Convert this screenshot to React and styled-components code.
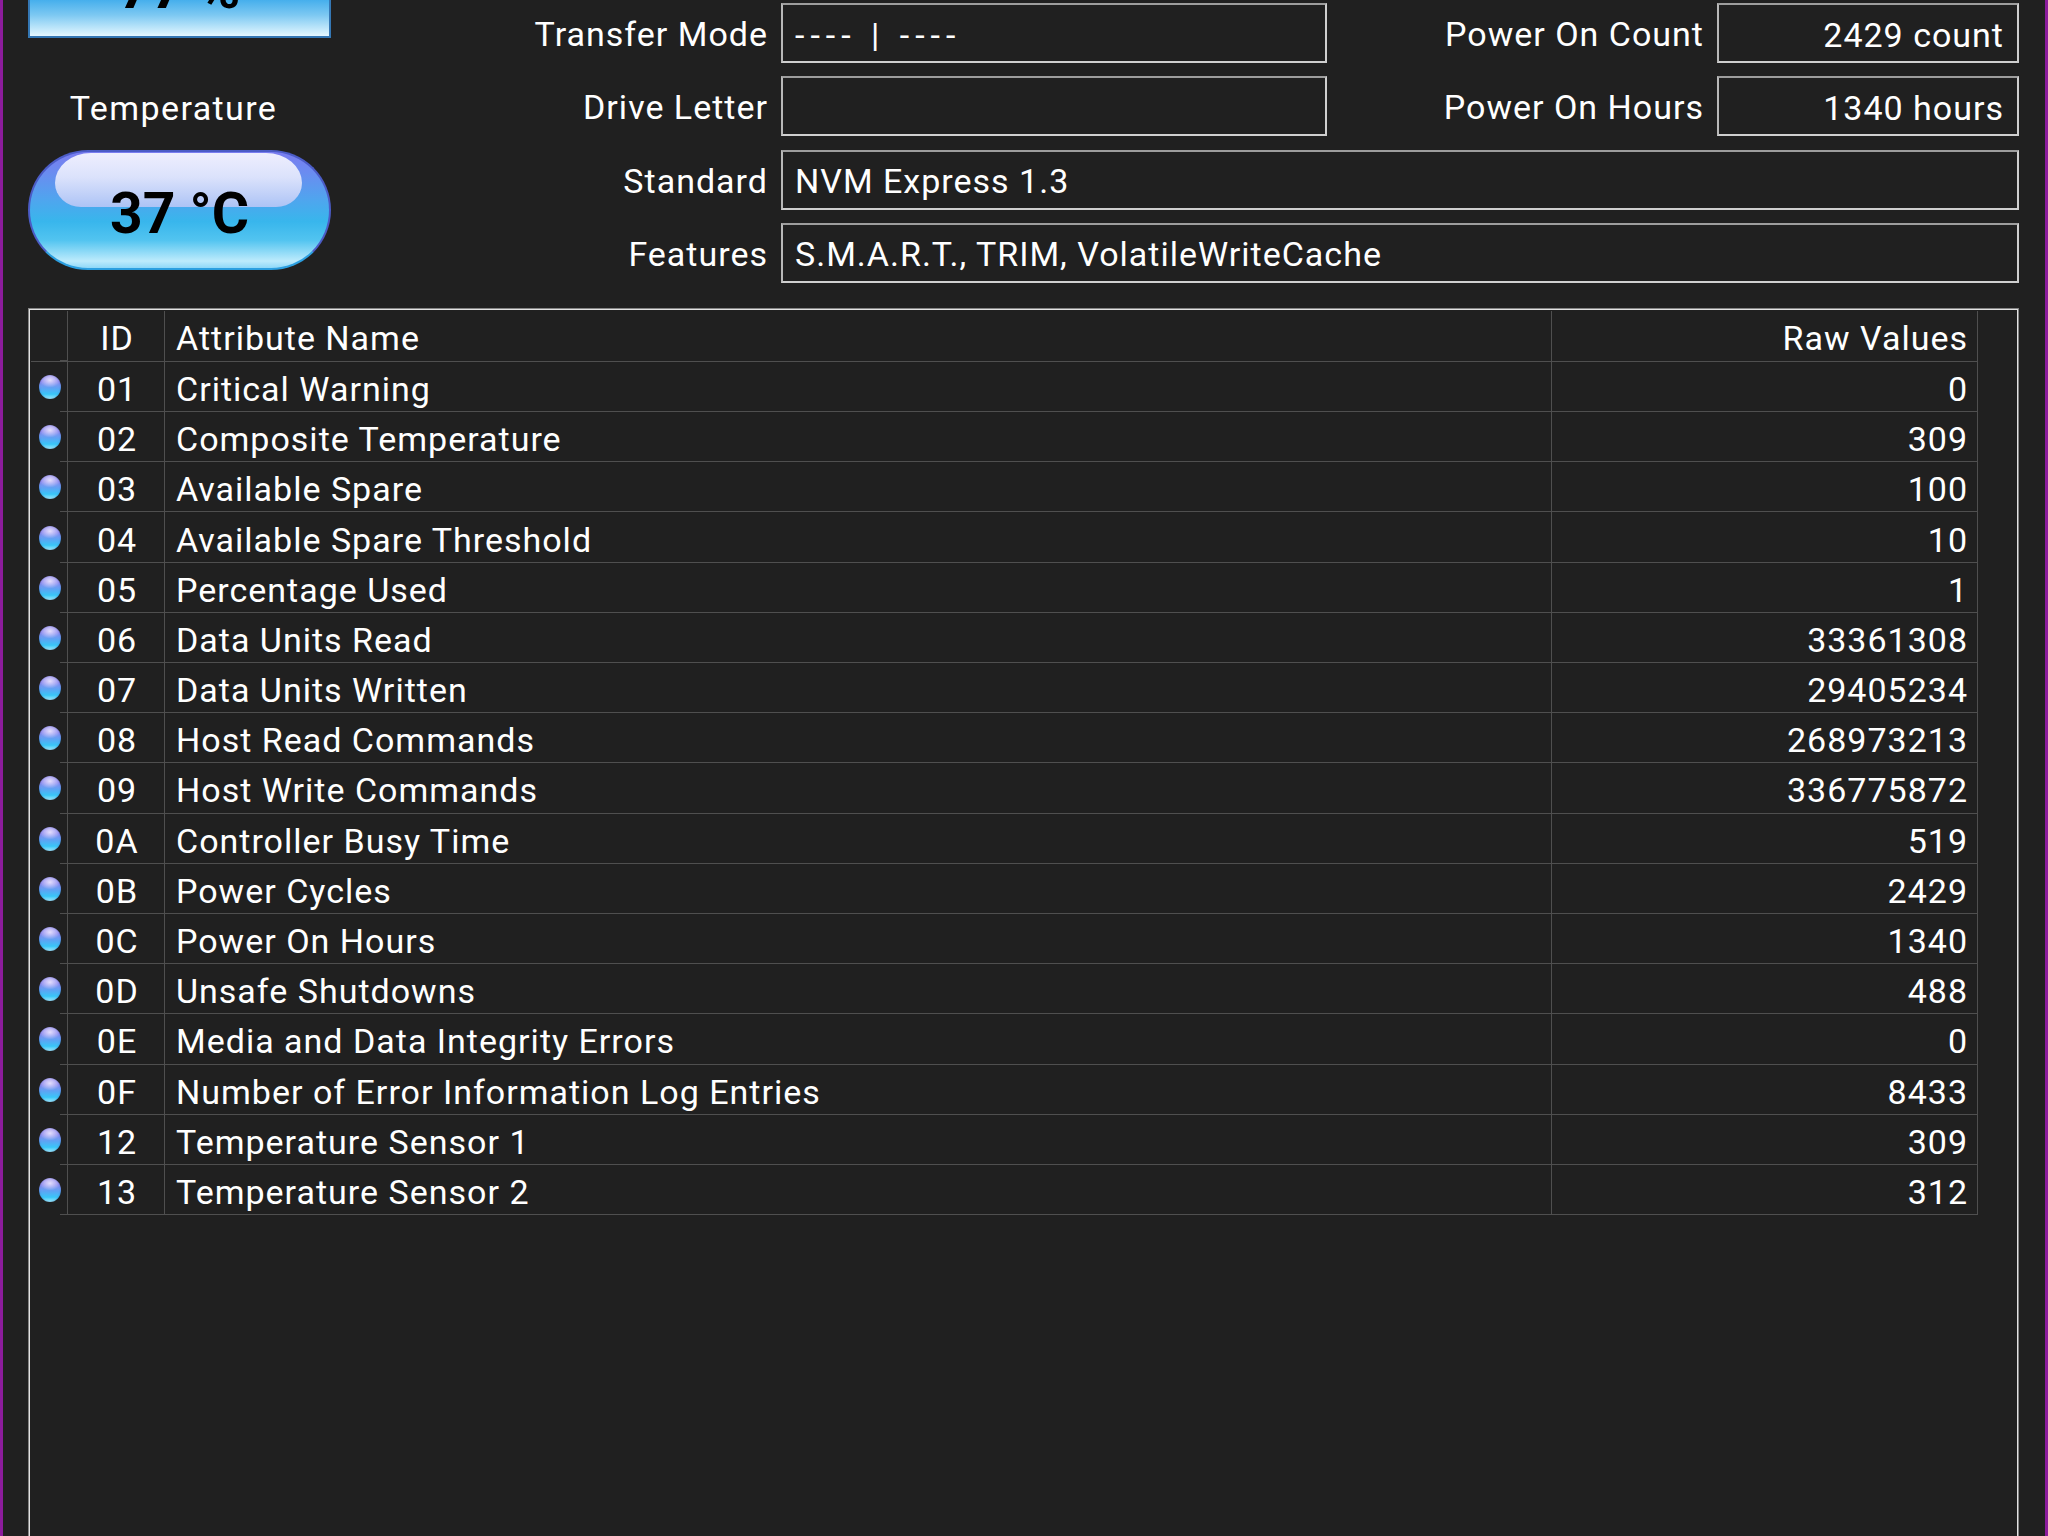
import React from 'react';
import styled, { createGlobalStyle } from 'styled-components';

const GlobalStyle = createGlobalStyle`
  html, body {
    margin: 0;
    padding: 0;
    background: #202020;
    overflow: hidden;
  }
  body {
    font-family: Roboto, "Liberation Sans", sans-serif;
  }
`;

const Window = styled.div`
  box-sizing: border-box;
  height: 1536px;
  border-left: 3px solid #8c1c9c;
  border-right: 3px solid #8c1c9c;
  padding: 3px 26px 0 25px;
  background: #202020;
  color: #fff;
  font-size: 34px;
  letter-spacing: 1px;
  display: flex;
  flex-direction: column;
  overflow: hidden;
`;

const TopSection = styled.div`
  display: flex;
  align-items: flex-start;
`;

const StatusColumn = styled.div`
  width: 303px;
  flex: none;
  display: flex;
  flex-direction: column;
  align-items: stretch;
`;

const HealthBox = styled.div`
  box-sizing: border-box;
  height: 100px;
  margin-top: -65px;
  border: 2px solid #3477b4;
  background: linear-gradient(to bottom, #3a9fe6 0%, #44aeec 62%, #7cc8f2 78%, #d6f1fd 97%, #e6f7ff 100%);
  display: flex;
  align-items: center;
  justify-content: center;
  color: #000;
  font-weight: 700;
  font-size: 57px;
  letter-spacing: 0;
`;

const TempLabel = styled.div`
  margin: 50px 0 22px;
  line-height: 40px;
  text-align: center;
  padding-right: 12px;
  letter-spacing: 1.4px;
`;

const TempPill = styled.div`
  position: relative;
  box-sizing: border-box;
  height: 120px;
  border-radius: 60px;
  border: 2px solid #4b5cc6;
  border-bottom-color: #2c9fe0;
  background: linear-gradient(to bottom, #7a7cf0 0%, #6a8cf0 18%, #4ea6ee 42%, #38b6ec 60%, #52c4f0 76%, #bdebfc 94%, #8fd8f8 100%);
  display: flex;
  align-items: center;
  justify-content: center;
  padding-top: 6px;
  color: #000;
  font-weight: 700;
  font-size: 57px;
  letter-spacing: 0;

  &::before {
    content: '';
    position: absolute;
    left: 25px;
    right: 27px;
    top: 1px;
    height: 54px;
    border-radius: 36px 36px 26px 26px / 30px 30px 24px 24px;
    background: linear-gradient(to bottom, #fbfbff 0%, #e8ebfd 45%, #b8c6f6 100%);
    opacity: 0.9;
  }

  span {
    position: relative;
  }
`;

const InfoGrid = styled.div`
  flex: 1;
  display: grid;
  grid-template-columns: 1fr 546px 364px 302px;
  grid-auto-rows: 60px;
  column-gap: 13px;
  row-gap: 13.3px;
`;

const FieldLabel = styled.div`
  display: flex;
  align-items: center;
  justify-content: flex-end;
  white-space: nowrap;
  padding-top: 2px;
`;

const Field = styled.div`
  box-sizing: border-box;
  border: 2px solid #cfcfcf;
  border-top-color: #9d9d9d;
  border-left-color: #b8b8b8;
  display: flex;
  align-items: center;
  justify-content: ${(p) => (p.$right ? 'flex-end' : 'flex-start')};
  grid-column: ${(p) => (p.$wide ? '2 / 5' : 'auto')};
  padding: 3px 13px 0 12px;
  white-space: nowrap;
  letter-spacing: ${(p) => (p.$dashed ? '6px' : '1px')};
`;

const Table = styled.div`
  flex: 1 0 auto;
  margin-top: 25px;
  margin-bottom: -12px;
  border: 1px solid #858585;
  box-shadow: inset 0 0 0 1px #e2e2e2;
  padding: 2px;
`;

const Row = styled.div`
  display: grid;
  grid-template-columns: 37px 97px 1387px 426px;
  height: ${(p) => (p.$header ? '51px' : '50.2px')};
`;

const Cell = styled.div`
  box-sizing: border-box;
  display: flex;
  align-items: center;
  justify-content: ${(p) =>
    p.$align === 'right' ? 'flex-end' : p.$align === 'center' ? 'center' : 'flex-start'};
  border-right: 1px solid #4f4f4f;
  border-bottom: 1px solid #4f4f4f;
  padding: 5px 9px 0 11px;
  white-space: nowrap;
`;

const DotCell = styled.div`
  position: relative;
  display: flex;
  align-items: center;
  justify-content: center;
  border-right: 1px solid #4f4f4f;
  border-bottom: ${(p) => (p.$header ? '1px solid #4f4f4f' : 'none')};
  padding-left: 1px;

  &::after {
    content: '';
    position: absolute;
    right: 0;
    bottom: 0;
    width: 7px;
    height: 1px;
    background: #4f4f4f;
  }
`;

const Dot = styled.span`
  width: 22px;
  height: 24px;
  border-radius: 50%;
  background:
    radial-gradient(ellipse 45% 30% at 50% 22%, rgba(240, 236, 255, 0.85), rgba(240, 236, 255, 0) 100%),
    linear-gradient(to bottom, #a89cf2 0%, #8e8cf0 28%, #5ea4f4 55%, #38c6f8 80%, #a4efff 100%);
  box-shadow: inset 0 0 2px rgba(40, 60, 160, 0.5);
`;

const fields = [
  { label: 'Transfer Mode', value: '---- | ----', dashed: true, side: 'Power On Count', sideValue: '2429 count' },
  { label: 'Drive Letter', value: '', side: 'Power On Hours', sideValue: '1340 hours' },
  { label: 'Standard', value: 'NVM Express 1.3' },
  { label: 'Features', value: 'S.M.A.R.T., TRIM, VolatileWriteCache' },
];

const attributes = [
  ['01', 'Critical Warning', '0'],
  ['02', 'Composite Temperature', '309'],
  ['03', 'Available Spare', '100'],
  ['04', 'Available Spare Threshold', '10'],
  ['05', 'Percentage Used', '1'],
  ['06', 'Data Units Read', '33361308'],
  ['07', 'Data Units Written', '29405234'],
  ['08', 'Host Read Commands', '268973213'],
  ['09', 'Host Write Commands', '336775872'],
  ['0A', 'Controller Busy Time', '519'],
  ['0B', 'Power Cycles', '2429'],
  ['0C', 'Power On Hours', '1340'],
  ['0D', 'Unsafe Shutdowns', '488'],
  ['0E', 'Media and Data Integrity Errors', '0'],
  ['0F', 'Number of Error Information Log Entries', '8433'],
  ['12', 'Temperature Sensor 1', '309'],
  ['13', 'Temperature Sensor 2', '312'],
];

export default function App() {
  return (
    <>
      <GlobalStyle />
      <Window>
        <TopSection>
          <StatusColumn>
            <HealthBox>77 %</HealthBox>
            <TempLabel>Temperature</TempLabel>
            <TempPill>
              <span>37 °C</span>
            </TempPill>
          </StatusColumn>
          <InfoGrid>
            {fields.map((f) => (
              <React.Fragment key={f.label}>
                <FieldLabel>{f.label}</FieldLabel>
                <Field $wide={!f.side} $dashed={f.dashed}>{f.value}</Field>
                {f.side && (
                  <>
                    <FieldLabel>{f.side}</FieldLabel>
                    <Field $right>{f.sideValue}</Field>
                  </>
                )}
              </React.Fragment>
            ))}
          </InfoGrid>
        </TopSection>

        <Table>
          <Row $header>
            <DotCell $header />
            <Cell $align="center">ID</Cell>
            <Cell>Attribute Name</Cell>
            <Cell $align="right">Raw Values</Cell>
          </Row>
          {attributes.map(([id, name, raw]) => (
            <Row key={id}>
              <DotCell>
                <Dot />
              </DotCell>
              <Cell $align="center">{id}</Cell>
              <Cell>{name}</Cell>
              <Cell $align="right">{raw}</Cell>
            </Row>
          ))}
        </Table>
      </Window>
    </>
  );
}
